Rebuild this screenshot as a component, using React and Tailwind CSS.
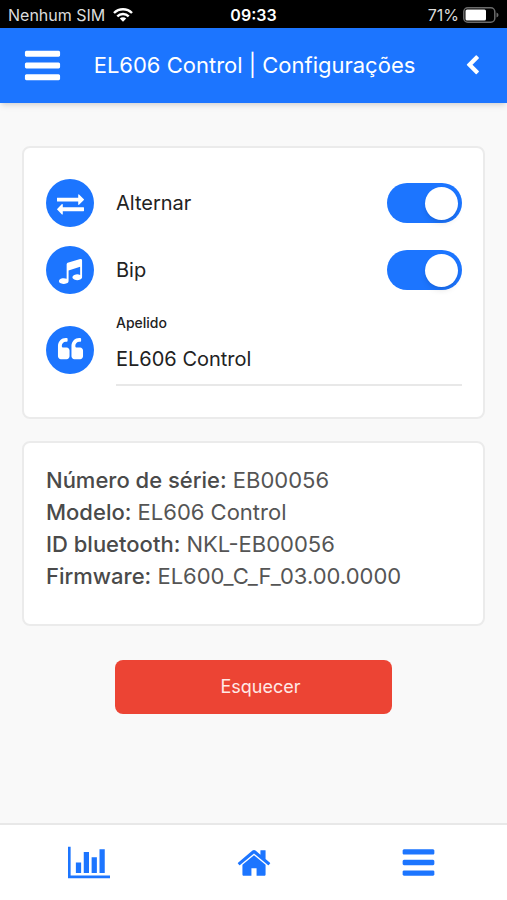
import { useState } from "react";

// Font Awesome 4 glyphs
const icons = {
  bars: "M1664 1344v128q0 26-19 45t-45 19h-1408q-26 0-45-19t-19-45v-128q0-26 19-45t45-19h1408q26 0 45 19t19 45zm0-512v128q0 26-19 45t-45 19h-1408q-26 0-45-19t-19-45v-128q0-26 19-45t45-19h1408q26 0 45 19t19 45zm0-512v128q0 26-19 45t-45 19h-1408q-26 0-45-19t-19-45v-128q0-26 19-45t45-19h1408q26 0 45 19t19 45z",
  back: "M1427 301l-531 531 531 531q19 19 19 45t-19 45l-166 166q-19 19-45 19t-45-19l-742-742q-19-19-19-45t19-45l742-742q19-19 45-19t45 19l166 166q19 19 19 45t-19 45z",
  exchange: "M1792 1184v192q0 13-9.5 22.5t-22.5 9.5h-1376v192q0 13-9.5 22.5t-22.5 9.5q-12 0-24-10l-319-320q-9-9-9-22 0-14 9-23l320-320q9-9 23-9 13 0 22.5 9.5t9.5 22.5v192h1376q13 0 22.5 9.5t9.5 22.5zm0-544q0 14-9 23l-320 320q-9 9-23 9-13 0-22.5-9.5t-9.5-22.5v-192h-1376q-13 0-22.5-9.5t-9.5-22.5v-192q0-13 9.5-22.5t22.5-9.5h1376v-192q0-14 9-23t23-9q12 0 24 10l319 319q9 9 9 23z",
  music: "M1664 224v1120q0 50-34 89t-86 60.5-103.5 32-96.5 10.5-96.5-10.5-103.5-32-86-60.5-34-89 34-89 86-60.5 103.5-32 96.5-10.5q105 0 192 39v-537l-768 237v709q0 50-34 89t-86 60.5-103.5 32-96.5 10.5-96.5-10.5-103.5-32-86-60.5-34-89 34-89 86-60.5 103.5-32 96.5-10.5q105 0 192 39v-967q0-31 19-56.5t49-35.5l832-256q12-4 28-4 40 0 68 28t28 68z",
  quote: "M832 960v384q0 80-56 136t-136 56h-384q-80 0-136-56t-56-136v-704q0-104 40.5-198.5t109.5-163.5 163.5-109.5 198.5-40.5h64q26 0 45 19t19 45v128q0 26-19 45t-45 19h-64q-106 0-181 75t-75 181v32q0 40 28 68t68 28h224q80 0 136 56t56 136zm896 0v384q0 80-56 136t-136 56h-384q-80 0-136-56t-56-136v-704q0-104 40.5-198.5t109.5-163.5 163.5-109.5 198.5-40.5h64q26 0 45 19t19 45v128q0 26-19 45t-45 19h-64q-106 0-181 75t-75 181v32q0 40 28 68t68 28h224q80 0 136 56t56 136z",
  home: "M1472 992v480q0 26-19 45t-45 19h-384v-384h-256v384h-384q-26 0-45-19t-19-45v-480q0-1 .5-3t.5-3l575-474 575 474q1 2 1 6zm223-69l-62 74q-8 9-21 11h-3q-13 0-21-7l-692-577-692 577q-12 8-24 7-13-2-21-11l-62-74q-8-10-7-23.5t11-21.5l719-599q32-26 76-26t76 26l244 204v-195q0-14 9-23t23-9h192q14 0 23 9t9 23v408l219 182q10 8 11 21.5t-7 23.5z",
  chart: "M640 896v512h-256v-512h256zm384-512v1024h-256v-1024h256zm1024 1152v128h-2048v-1536h128v1408h1920zm-640-896v768h-256v-768h256zm384-384v1152h-256v-1152h256z",
};

function Icon({ name, className }) {
  return (
    <svg
      viewBox={name === "chart" ? "0 0 2048 1792" : "0 0 1792 1792"}
      fill="currentColor"
      className={className}
      aria-hidden="true"
    >
      <path d={icons[name]} />
    </svg>
  );
}

function StatusBar() {
  return (
    <div className="grid grid-cols-3 items-center h-7 px-2 pt-0.5 bg-black text-[#dcdcdc] text-base">
      <div className="flex items-center gap-2 whitespace-nowrap">
        <span>Nenhum SIM</span>
        <svg viewBox="0 0 20 14" className="w-5 h-3.5" fill="none" stroke="white" strokeWidth="2.4" aria-hidden="true">
          <path d="M1 5a12.7 12.7 0 0 1 18 0" />
          <path d="M4.3 8.4a8 8 0 0 1 11.4 0" />
          <path d="M10 13.8L6.8 10.6a4.5 4.5 0 0 1 6.4 0z" fill="white" stroke="none" />
        </svg>
      </div>
      <span className="text-center font-semibold text-white">09:33</span>
      <div className="flex items-center justify-end gap-1">
        <span>71%</span>
        <svg viewBox="0 0 36 16" className="w-9 h-4" aria-hidden="true">
          <rect x="0.8" y="0.8" width="31" height="14.4" rx="4" fill="none" stroke="#6b6b6b" strokeWidth="1.5" />
          <rect x="2.5" y="2.5" width="20.5" height="11" rx="1.5" fill="white" />
          <path d="M33.5 5.5q2 .8 2 2.5t-2 2.5z" fill="#6b6b6b" />
        </svg>
      </div>
    </div>
  );
}

function Badge({ icon }) {
  return (
    <span className="flex items-center justify-center shrink-0 size-12 rounded-full bg-[#1c75ff] text-white">
      <Icon name={icon} className="size-[27px]" />
    </span>
  );
}

function ToggleRow({ icon, label }) {
  const [on, setOn] = useState(true);

  return (
    <label className="flex items-center gap-[22px]">
      <Badge icon={icon} />
      <span className="flex-1 text-xl text-[#222]">{label}</span>
      <input
        type="checkbox"
        role="switch"
        checked={on}
        onChange={() => setOn(!on)}
        className="appearance-none flex items-center w-[75px] h-10 px-1 rounded-full bg-gray-300 checked:bg-[#1c75ff] checked:justify-end before:size-[33px] before:rounded-full before:bg-white before:shadow-md"
      />
    </label>
  );
}

const info = [
  ["Número de série:", "EB00056"],
  ["Modelo:", "EL606 Control"],
  ["ID bluetooth:", "NKL-EB00056"],
  ["Firmware:", "EL600_C_F_03.00.0000"],
];

export default function App() {
  const [nickname, setNickname] = useState("EL606 Control");

  return (
    <div className="flex flex-col min-h-screen bg-[#f9f9f9] font-[Inter,sans-serif]">
      <StatusBar />

      <header className="flex items-center h-[75px] pl-[22px] pr-6 bg-[#1c75ff] text-white shadow-md">
        <button type="button" aria-label="Menu">
          <Icon name="bars" className="size-[41px]" />
        </button>
        <h1 className="flex-1 pr-4 text-center text-[22px] whitespace-nowrap">EL606 Control | Configurações</h1>
        <button type="button" aria-label="Voltar">
          <Icon name="back" className="size-[21px]" />
        </button>
      </header>

      <main className="flex-1 flex flex-col gap-[22px] px-[22px] pt-[43px] pb-8">
        <section className="flex flex-col gap-[19px] pl-[22px] pr-[21px] py-[31px] bg-white border-2 border-[#ebebeb] rounded-lg">
          <ToggleRow icon="exchange" label="Alternar" />
          <ToggleRow icon="music" label="Bip" />
          <div className="flex items-center gap-[22px]">
            <Badge icon="quote" />
            <div className="flex-1 flex flex-col">
              <label htmlFor="nickname" className="text-sm font-medium text-[#222]">
                Apelido
              </label>
              <input
                id="nickname"
                type="text"
                value={nickname}
                onChange={(e) => setNickname(e.target.value)}
                className="w-full h-[53px] border-b-2 border-[#e8e8e8] text-xl text-[#222] outline-none"
              />
            </div>
          </div>
        </section>

        <section className="px-[22px] pt-[21px] pb-8 bg-white border-2 border-[#ebebeb] rounded-lg text-[22px] leading-8 text-[#555]">
          {info.map(([name, value]) => (
            <p key={name}>
              <span className="font-medium text-[#4a4a4a]">{name}</span> {value}
            </p>
          ))}
        </section>

        <button
          type="button"
          className="self-center w-3/5 h-[54px] mt-3 pl-3.5 rounded-lg bg-[#ec4434] text-lg text-[#ffe9e6]"
        >
          Esquecer
        </button>
      </main>

      <nav className="grid grid-cols-3 items-center justify-items-center h-[77px] px-1.5 bg-white border-t-2 border-[#e8e8e8] text-[#1c75ff]">
        <a href="#historico" aria-label="Histórico">
          <Icon name="chart" className="w-[42px]" />
        </a>
        <a href="#inicio" aria-label="Início">
          <Icon name="home" className="size-9" />
        </a>
        <a href="#menu" aria-label="Menu">
          <Icon name="bars" className="size-[37px]" />
        </a>
      </nav>
    </div>
  );
}
